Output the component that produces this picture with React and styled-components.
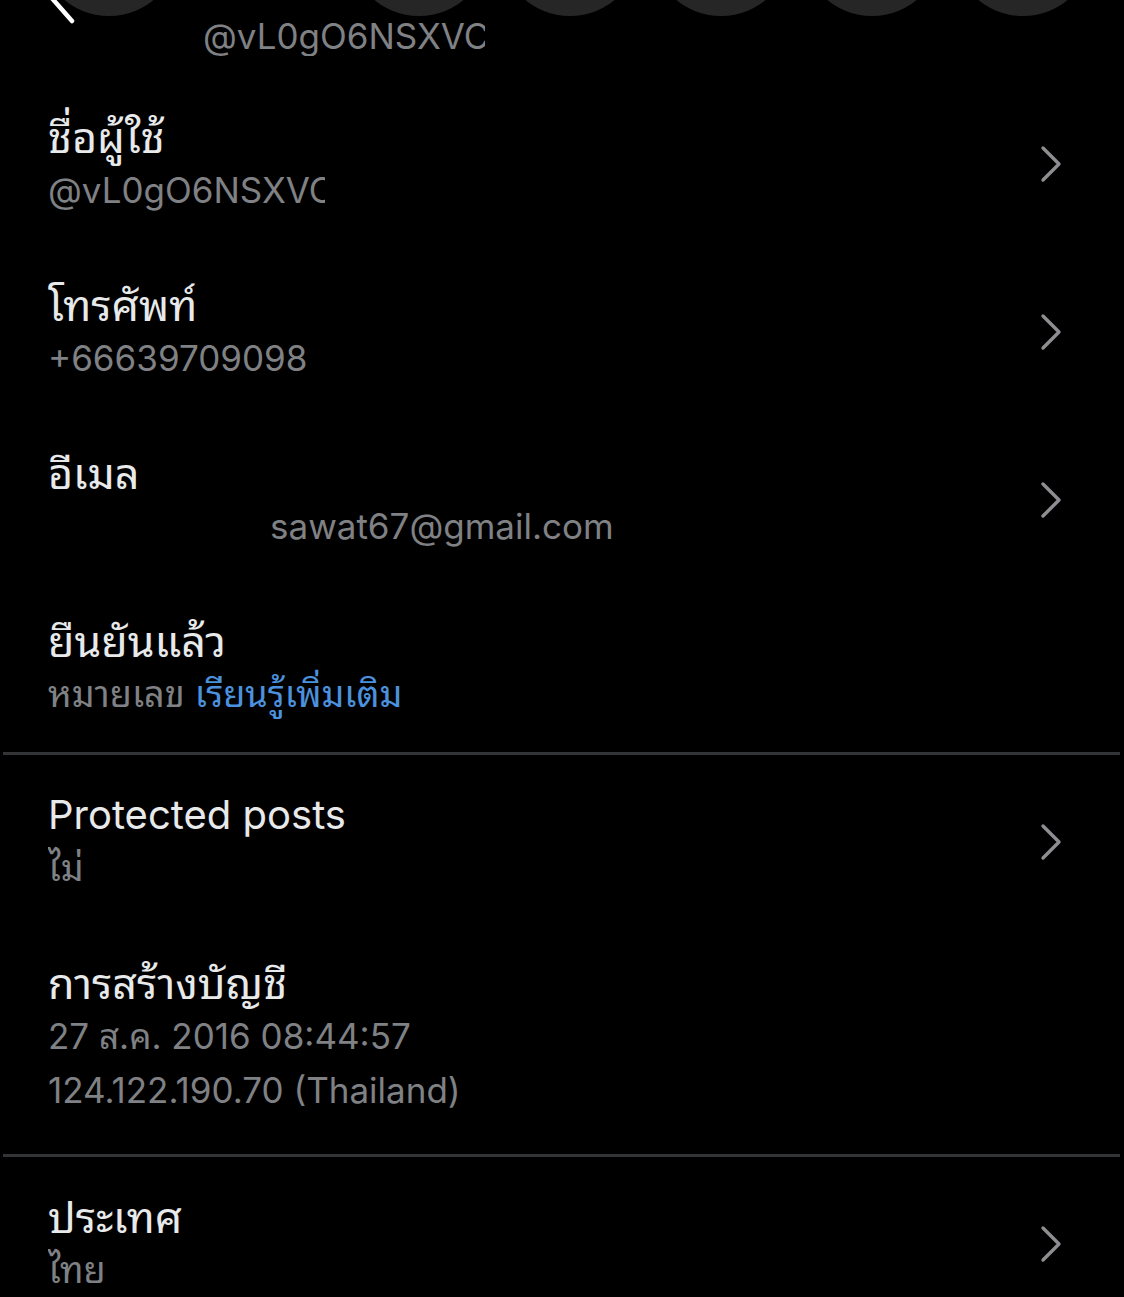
import React from "react";
import styled, { createGlobalStyle } from "styled-components";

const FONT_STACK = `Inter, "Noto Sans Thai Looped", "Noto Sans Thai", "Noto Sans", "DejaVu Sans", sans-serif`;

const GlobalStyle = createGlobalStyle`
  html, body {
    margin: 0;
    padding: 0;
    background: #000;
  }
  body {
    font-family: ${FONT_STACK};
  }
`;

const Page = styled.div`
  width: 1124px;
  height: 1297px;
  overflow: hidden;
  background: #000;
  color: #e7e9ea;
  font-family: ${FONT_STACK};
`;

const Header = styled.header`
  position: relative;
  height: 80px;
  display: flex;
  flex-direction: column;
`;

const CircleStrip = styled.div`
  height: 16px;
  overflow: hidden;
  display: flex;
  align-items: flex-end;
  padding-left: 39px;
  gap: 11px;
`;

const Circle = styled.div`
  flex: none;
  width: 140px;
  height: 140px;
  border-radius: 50%;
  background: #262626;
  margin-left: ${(p) => (p.$skip ? "159px" : "0")};
`;

const BackArrow = styled.svg`
  position: absolute;
  left: 48px;
  top: -6px;
  width: 32px;
  height: 34px;
`;

const HeaderHandle = styled.div`
  margin-left: 203px;
  width: 282px;
  overflow: hidden;
  white-space: nowrap;
  font-size: 35px;
  line-height: 40px;
  color: #7f8184;
`;

const Section = styled.section`
  display: flex;
  flex-direction: column;
  padding-top: ${(p) => p.$top || 0}px;
`;

const Divider = styled.hr`
  margin: ${(p) => p.$before || 0}px 4px 0 3px;
  border: none;
  height: 3px;
  background: #333436;
`;

const Row = styled.div`
  display: flex;
  align-items: center;
  justify-content: space-between;
  padding: 31px 62px 31px 48px;
`;

const TextCol = styled.div`
  display: flex;
  flex-direction: column;
  min-width: 0;
`;

const Title = styled.div`
  font-size: ${(p) => (p.$thai ? "43px" : "40px")};
  line-height: 52px;
  color: #e7e9ea;
  white-space: nowrap;
`;

const Sub = styled.div`
  font-size: ${(p) => (p.$thai ? "36px" : "35px")};
  line-height: 54px;
  color: #7f8184;
  white-space: nowrap;
  overflow: hidden;
  max-width: ${(p) => (p.$clip ? `${p.$clip}px` : "none")};
  padding-left: ${(p) => (p.$indent ? `${p.$indent}px` : "0")};
`;

const Link = styled.span`
  color: #4b91dd;
`;

const Chevron = styled.svg`
  flex: none;
  width: 22px;
  height: 38px;
`;

function ChevronIcon() {
  return (
    <Chevron viewBox="0 0 22 38" fill="none">
      <path
        d="M3 3 L19 19 L3 35"
        stroke="#8e8e92"
        strokeWidth="3.4"
        strokeLinecap="round"
        strokeLinejoin="round"
      />
    </Chevron>
  );
}

function InfoRow({ title, thai, lines, chevron }) {
  return (
    <Row>
      <TextCol>
        <Title $thai={thai}>{title}</Title>
        {lines}
      </TextCol>
      {chevron && <ChevronIcon />}
    </Row>
  );
}

export default function App() {
  return (
    <Page>
      <GlobalStyle />
      <Header>
        <CircleStrip>
          <Circle />
          <Circle $skip />
          <Circle />
          <Circle />
          <Circle />
          <Circle />
        </CircleStrip>
        <BackArrow viewBox="0 0 32 34" fill="none">
          <path
            d="M2 2 L24 27"
            stroke="#ffffff"
            strokeWidth="4.5"
            strokeLinecap="round"
          />
        </BackArrow>
        <HeaderHandle>@vL0gO6NSXVC</HeaderHandle>
      </Header>

      <Section>
        <InfoRow
          title="ชื่อผู้ใช้"
          thai
          chevron
          lines={<Sub $clip={277}>@vL0gO6NSXVC</Sub>}
        />
        <InfoRow
          title="โทรศัพท์"
          thai
          chevron
          lines={<Sub>+66639709098</Sub>}
        />
        <InfoRow
          title="อีเมล"
          thai
          chevron
          lines={<Sub $indent={222}>sawat67@gmail.com</Sub>}
        />
        <InfoRow
          title="ยืนยันแล้ว"
          thai
          lines={
            <Sub $thai>
              หมายเลข <Link>เรียนรู้เพิ่มเติม</Link>
            </Sub>
          }
        />
      </Section>

      <Divider />

      <Section $top={3}>
        <InfoRow title="Protected posts" chevron lines={<Sub $thai>ไม่</Sub>} />
        <InfoRow
          title="การสร้างบัญชี"
          thai
          lines={
            <>
              <Sub>27 ส.ค. 2016 08:44:57</Sub>
              <Sub>124.122.190.70 (Thailand)</Sub>
            </>
          }
        />
      </Section>

      <Divider $before={6} />

      <Section $top={3}>
        <InfoRow title="ประเทศ" thai chevron lines={<Sub $thai>ไทย</Sub>} />
      </Section>
    </Page>
  );
}
